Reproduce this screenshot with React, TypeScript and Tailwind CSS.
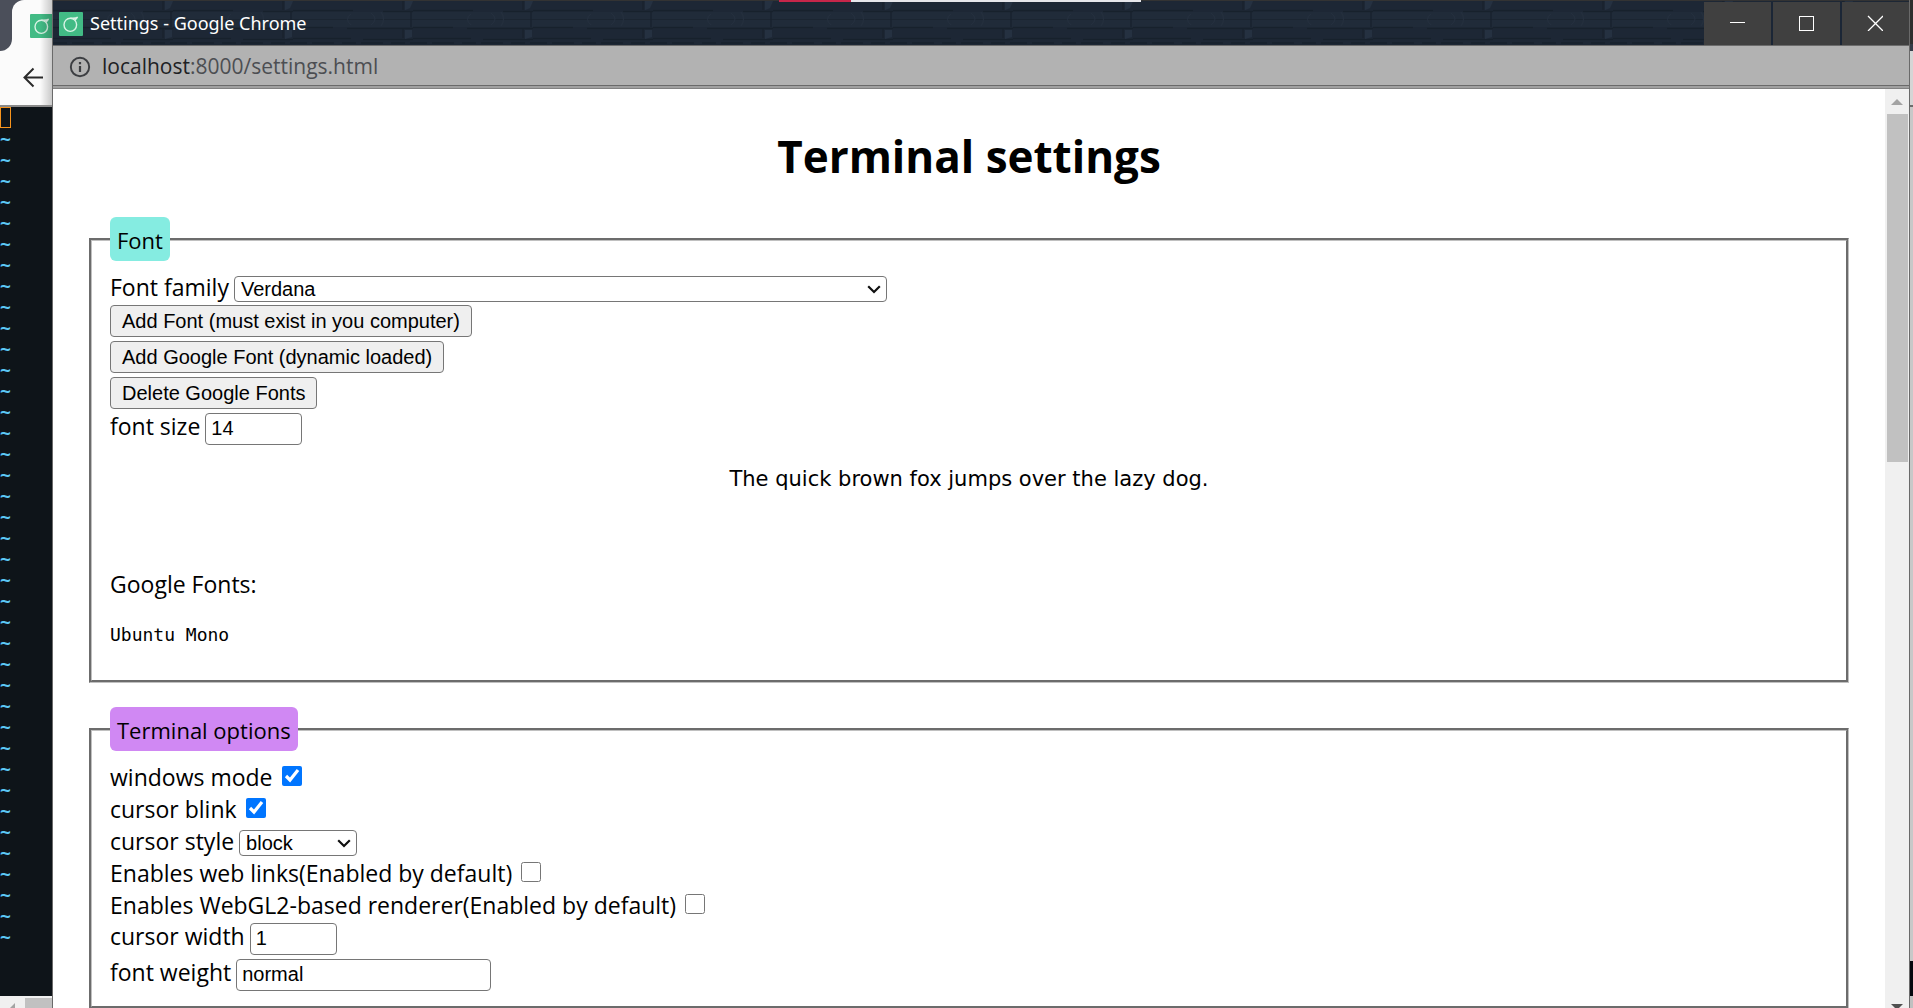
import React, { useId, useState } from 'react';
import type { ReactNode } from 'react';

const TILDE_ROWS = Array.from({ length: 39 }, (_, i) => i);

const FONT_FAMILIES = ['Verdana', 'Consolas', 'Courier New', 'Ubuntu Mono'];
const CURSOR_STYLES = ['block', 'underline', 'bar'];

function AppLogo() {
  return (
    <svg viewBox="0 0 24 24" className="size-6 shrink-0" aria-hidden="true">
      <rect width="24" height="24" rx="1" fill="#42bb85" />
      <ellipse cx="11.3" cy="12.8" rx="6.3" ry="6.6" fill="none" stroke="#d8f3e5" strokeWidth="1.4" />
      <path d="M11.3 6.2C14 6.4 17 6.4 18.8 5.2M18.2 5.8L15.6 8.4" fill="none" stroke="#d8f3e5" strokeWidth="1.4" />
    </svg>
  );
}

function BrickTexture() {
  return (
    <svg className="absolute inset-0 h-full w-full" aria-hidden="true">
      <defs>
        <pattern id="bricks" x="0" y="0" width="120" height="45" patternUnits="userSpaceOnUse">
          <rect width="120" height="45" fill="#1d2735" />
          <g opacity="0.55">
            <rect y="12" width="120" height="15" fill="#222d3c" />
            <path d="M0 10.5H60M90 11.5H120M0 27.5H40M54 28.5H120M0 38.5H58M70 39.5H120" stroke="#121a24" strokeWidth="1.5" />
            <path d="M0 19.5H120" stroke="#18212d" strokeWidth="1" />
            <path d="M110 1v9M118 12v15M110 29v9" stroke="#131b26" strokeWidth="1.5" />
            <path d="M112 1h8l-3 7-5 2zM112 30h7v7l-7 2z" fill="#2b384a" />
            <path d="M58 14q-7 5 0 11M78 13q8 6 0 12M88 12q5 7 0 14" fill="none" stroke="#2a3544" strokeWidth="1" />
            <path d="M0 43H120" stroke="#141c27" strokeWidth="2" strokeDasharray="14 5 22 8" />
          </g>
        </pattern>
      </defs>
      <rect width="100%" height="100%" fill="url(#bricks)" />
    </svg>
  );
}

function WindowButton({ label, children }: { label: string; children: ReactNode }) {
  return (
    <button aria-label={label} className="flex w-[67px] items-start justify-center bg-[#404040] pt-[13px] pr-0.5">
      <svg viewBox="0 0 16 16" className="size-4" fill="none" stroke="#ffffff" shapeRendering="crispEdges">
        {children}
      </svg>
    </button>
  );
}

function TitleBar() {
  return (
    <header className="relative flex h-[45px] shrink-0 items-stretch justify-between overflow-hidden bg-[#1d2735]">
      <BrickTexture />
      <div className="absolute inset-x-0 top-0 h-px bg-[#333333]" />
      <div className="absolute top-0 left-[726px] flex h-0.5 w-[362px]">
        <span className="w-[72px] bg-[#c7264a]" />
        <span className="flex-1 bg-[#e6e6ea]" />
      </div>
      <div className="relative flex items-center gap-[7px] pt-0.5 pl-1.5">
        <AppLogo />
        <span className="font-['Noto_Sans',sans-serif] text-[18px] text-white">Settings - Google Chrome</span>
      </div>
      <div className="relative mt-0.5 flex gap-0.5 bg-[#1b2636]">
        <WindowButton label="Minimize">
          <path d="M1 7.5H16" />
        </WindowButton>
        <WindowButton label="Maximize">
          <rect x="1.5" y="1.5" width="14" height="14" />
        </WindowButton>
        <WindowButton label="Close">
          <path d="M1 1L16 16M16 1L1 16" shapeRendering="auto" strokeWidth="1.3" />
        </WindowButton>
      </div>
    </header>
  );
}

function AddressBar() {
  return (
    <div className="flex h-11 shrink-0 flex-col border-t border-[#6c6c6c] bg-[#b2b2b2]">
      <div className="flex h-[39px] shrink-0 items-center gap-[11px] pt-0.5 pl-4">
        <svg viewBox="0 0 24 24" className="size-[22px]" fill="none" stroke="#3c3e42" strokeWidth="2.1" aria-hidden="true">
          <circle cx="12" cy="12" r="10" />
          <path d="M12 11v6.5M12 6.5v2.4" strokeWidth="2.4" />
        </svg>
        <span className="font-['Open_Sans',sans-serif] text-[21px] text-[#4c4e52]">
          <span className="text-[#202124]">localhost</span>:8000/settings.html
        </span>
      </div>
      <div className="h-1 shrink-0 border-y border-t-[#6a6a6a] border-b-[#828282] bg-[#a0a0a0]" />
    </div>
  );
}

function ScrollArrow({ down = false }: { down?: boolean }) {
  return (
    <svg viewBox="0 0 12 6" className="h-1.5 w-3" aria-hidden="true">
      <path d={down ? 'M0 0H12L6 6Z' : 'M0 6H12L6 0Z'} fill={down ? '#505050' : '#a3a3a3'} />
    </svg>
  );
}

function BackgroundBrowser() {
  return (
    <aside className="flex w-[52px] shrink-0 flex-col overflow-hidden bg-[#0e1419]">
      <div className="relative h-[107px] shrink-0 border-b-2 border-[#8a8a8a] bg-[#fbfbfb]">
        <div className="flex h-[51px] bg-[#4b4f5a]">
          <div className="w-3 rounded-br-xl bg-[#4b4f5a]" />
          <div className="flex flex-1 overflow-hidden rounded-tl-xl bg-[#fbfbfb] pt-3.5 pl-[18px]">
            <AppLogo />
          </div>
        </div>
        <div className="absolute top-[39px] left-0 h-3 w-3 bg-[#fbfbfb]">
          <div className="h-full w-full rounded-br-xl bg-[#4b4f5a]" />
        </div>
        <button aria-label="Back" className="absolute top-[66px] left-[22px] text-[#2b2b2b]">
          <svg viewBox="0 0 22 22" className="size-[22px]" fill="none" stroke="currentColor" strokeWidth="2">
            <path d="M21 11.5H2.5M11.5 2.5L2.5 11.5L11.5 20.5" />
          </svg>
        </button>
        <div className="absolute inset-y-0 right-0 w-3 bg-gradient-to-r from-transparent to-black/20" />
      </div>
      <div className="flex-1 overflow-hidden font-['DejaVu_Sans_Mono',monospace] text-[18px] leading-[21px] font-bold text-[#5cc8f5]">
        <div className="h-[21px] w-[11px] border border-[#f7941d]" />
        {TILDE_ROWS.map((row) => (
          <div key={row}>~</div>
        ))}
      </div>
      <div className="flex h-3 shrink-0 bg-[#f0f0f0] pt-0.5">
        <svg viewBox="0 0 25 10" className="h-2.5 w-[25px]" aria-hidden="true">
          <path d="M15 5V10H10Z" fill="#a3a3a3" />
        </svg>
        <div className="flex-1 bg-[#c1c1c1]" />
      </div>
    </aside>
  );
}

function BackgroundEdge() {
  return (
    <div className="flex w-[3px] shrink-0 flex-col bg-[#c8c8c8]">
      <div className="h-11 bg-[#2e2e2e]" />
      <div className="h-[7px] bg-[#343a47]" />
      <div className="h-[54px] bg-[#d5d5d5]" />
      <div className="h-0.5 bg-[#6c6c6c]" />
      <div className="flex-1" />
      <div className="h-[35px] bg-[#05080e]" />
      <div className="h-3 bg-[#c0c0c0]" />
    </div>
  );
}

function Section({ title, tint, className, children }: { title: string; tint: string; className: string; children: ReactNode }) {
  return (
    <fieldset className={`min-w-0 border-[3px] border-[#c0c0c0] px-[18px] pt-2.5 [border-style:groove] ${className}`}>
      <legend className={`rounded-md px-[7px] pt-[7px] pb-[5px] text-[22px] leading-8 ${tint}`}>{title}</legend>
      {children}
    </fieldset>
  );
}

function SelectField({ label, options, width }: { label: string; options: string[]; width: string }) {
  const id = useId();
  return (
    <div className="flex items-start gap-[5px]">
      <label htmlFor={id}>{label}</label>
      <div className={`relative mt-[5px] ${width}`}>
        <select id={id} className="block h-[26px] w-full appearance-none rounded border border-[#767676] bg-white pl-1.5 font-['Liberation_Sans',sans-serif] text-[20px] leading-6">
          {options.map((option) => (
            <option key={option}>{option}</option>
          ))}
        </select>
        <svg viewBox="0 0 14 9" className="pointer-events-none absolute top-[9px] right-1.5 h-[9px] w-3.5" fill="none" stroke="#101010" strokeWidth="2.2" aria-hidden="true">
          <path d="M1.2 1.2L7 7L12.8 1.2" />
        </svg>
      </div>
    </div>
  );
}

function CheckField({ label, initial = false }: { label: string; initial?: boolean }) {
  const [checked, setChecked] = useState(initial);
  return (
    <div>
      <label className="inline-flex items-start gap-[9px]">
        {label}
        <input type="checkbox" checked={checked} onChange={(e) => setChecked(e.target.checked)} className="mt-[5px] size-5" />
      </label>
    </div>
  );
}

function InputField({ label, type = 'text', value, width }: { label: string; type?: string; value: string; width: string }) {
  const id = useId();
  return (
    <div className="flex items-start gap-[5px]">
      <label htmlFor={id} className="leading-[26px]">{label}</label>
      <input
        id={id}
        type={type}
        defaultValue={value}
        className={`h-8 rounded border border-[#767676] bg-white px-[5px] pb-0.5 font-['Liberation_Sans',sans-serif] text-[20px] leading-6 ${width}`}
      />
    </div>
  );
}

function PushButton({ children }: { children: ReactNode }) {
  return (
    <button className="h-8 rounded border border-[#767676] bg-[#efefef] px-[11px] font-['Liberation_Sans',sans-serif] text-[20px] leading-6">
      {children}
    </button>
  );
}

function SettingsPage() {
  return (
    <main className="min-w-0 flex-1 overflow-hidden bg-white px-9 pt-[37px] font-['Open_Sans',sans-serif] text-[23px] leading-8 text-black">
      <h1 className="text-center text-[44px] leading-[60px] font-bold">Terminal settings</h1>

      <Section title="Font" tint="bg-[#85ece1]" className="mt-[31px] pb-[33px]">
        <SelectField label="Font family" options={FONT_FAMILIES} width="w-[653px]" />
        <div className="mt-0.5 flex flex-col items-start gap-1">
          <PushButton>Add Font (must exist in you computer)</PushButton>
          <PushButton>Add Google Font (dynamic loaded)</PushButton>
          <PushButton>Delete Google Fonts</PushButton>
          <InputField label="font size" type="number" value="14" width="w-[97px]" />
        </div>
        <p className="mt-[22px] text-center font-['DejaVu_Sans',sans-serif] text-[21px] leading-6">
          The quick brown fox jumps over the lazy dog.
        </p>
        <p className="mt-[77px]">Google Fonts:</p>
        <p className="mt-[23px] font-['DejaVu_Sans_Mono',monospace] text-[18px] leading-6">Ubuntu Mono</p>
      </Section>

      <Section title="Terminal options" tint="bg-[#d088f3]" className="mt-6 pb-[15px]">
        <CheckField label="windows mode" initial />
        <CheckField label="cursor blink" initial />
        <SelectField label="cursor style" options={CURSOR_STYLES} width="w-[118px]" />
        <CheckField label="Enables web links(Enabled by default)" />
        <CheckField label="Enables WebGL2-based renderer(Enabled by default)" />
        <div className="mt-0.5 flex flex-col gap-1">
          <InputField label="cursor width" type="number" value="1" width="w-[87px]" />
          <InputField label="font weight" value="normal" width="w-[255px]" />
        </div>
      </Section>
    </main>
  );
}

export default function App() {
  return (
    <div className="flex h-screen overflow-hidden bg-[#6a6a6a]">
      <BackgroundBrowser />
      <div className="flex min-w-0 flex-1 flex-col border-x border-[#6a6a6a]">
        <TitleBar />
        <AddressBar />
        <div className="flex min-h-0 flex-1">
          <SettingsPage />
          <div className="flex w-6 shrink-0 flex-col items-center bg-[#f0f0f0] pt-2.5">
            <ScrollArrow />
            <div className="mt-[9px] h-[348px] w-[21px] bg-[#c1c1c1]" />
            <div className="flex-1" />
            <div className="h-1 overflow-hidden">
              <ScrollArrow down />
            </div>
          </div>
        </div>
      </div>
      <BackgroundEdge />
    </div>
  );
}
